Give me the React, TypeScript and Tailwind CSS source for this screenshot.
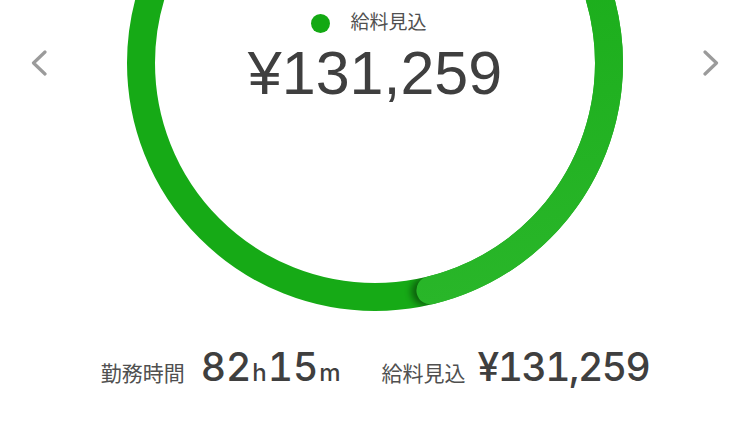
import React from "react";

const GREEN = "#16aa16";

function Chevron({ dir }: { dir: "left" | "right" }) {
  return (
    <svg width="16" height="26" viewBox="0 0 16 26" fill="none" aria-hidden="true">
      <path
        d={dir === "left" ? "M14 2 L2.5 13 L14 24" : "M2 2 L13.5 13 L2 24"}
        stroke="#9b9b9b"
        strokeWidth="3.2"
        strokeLinecap="round"
        strokeLinejoin="round"
      />
    </svg>
  );
}

// progress ring, cut off by the top of the screen
function Ring() {
  const cx = 250;
  const cy = 63;
  const r = 234;
  const end = (76.3 * Math.PI) / 180;
  const ex = cx + r * Math.cos(end);
  const ey = cy + r * Math.sin(end);
  const back = end + 0.022;
  const sx = cx + r * Math.cos(back);
  const sy = cy + r * Math.sin(back);
  return (
    <svg width="500" height="316" viewBox="0 0 500 316" className="absolute left-[125px] top-0" aria-hidden="true">
      <defs>
        <clipPath id="annulus">
          <path
            clipRule="evenodd"
            d={`M${cx - 248},${cy} a248,248 0 1,0 496,0 a248,248 0 1,0 -496,0 Z M${cx - 220},${cy} a220,220 0 1,0 440,0 a220,220 0 1,0 -440,0 Z`}
          />
        </clipPath>
        <linearGradient id="lap" gradientUnits="userSpaceOnUse" x1="250" y1="-171" x2="330" y2="300">
          <stop offset="0" stopColor="#14a914" />
          <stop offset="1" stopColor="#29b629" />
        </linearGradient>
        <filter id="soft" x="-50%" y="-50%" width="200%" height="200%">
          <feGaussianBlur stdDeviation="3.5" />
        </filter>
      </defs>
      <circle cx={cx} cy={cy} r={r} stroke={GREEN} strokeWidth="28" fill="none" />
      <g clipPath="url(#annulus)">
        <circle cx={sx} cy={sy} r="14" fill="#000" opacity="0.45" filter="url(#soft)" />
      </g>
      <path
        d={`M${cx},${cy - r} A${r},${r} 0 0 1 ${ex},${ey}`}
        stroke="url(#lap)"
        strokeWidth="28"
        strokeLinecap="round"
        fill="none"
      />
    </svg>
  );
}

export default function App() {
  return (
    <div
      className="w-[750px] h-[424px] overflow-hidden bg-white text-[#444444]"
      style={{ fontFamily: "'Liberation Sans', 'Noto Sans CJK JP', sans-serif" }}
    >
      <div className="relative h-[347px]">
        <Ring />
        <div className="relative flex items-start justify-between px-[31px]">
          <button className="mt-[50px]">
            <Chevron dir="left" />
          </button>

          <div className="flex flex-col items-center">
            <div className="mt-[13px] flex h-[20px] items-center gap-[20px] pr-[12px]">
              <span className="h-[19px] w-[19px] rounded-full bg-[#13a913]" />
              <span className="text-[19px] leading-[20px] text-[#505050]">給料見込</span>
            </div>
            <div className="mt-[10px] text-[61px] leading-none text-[#3f3f3f]">¥131,259</div>
          </div>

          <button className="mt-[50px]">
            <Chevron dir="right" />
          </button>
        </div>
      </div>

      <div className="flex items-baseline justify-center gap-[41px] leading-none text-[#3f3f3f]">
        <div className="flex items-baseline">
          <span className="text-[21px] text-[#505050]">勤務時間</span>
          <span className="ml-[16px] flex items-baseline font-medium tabular-nums font-['Inter',sans-serif]">
            <span className="text-[39px]">82</span>
            <span className="text-[24px] px-[1px]">h</span>
            <span className="text-[39px]">15</span>
            <span className="text-[24px] pl-[1px]">m</span>
          </span>
        </div>
        <div className="flex items-baseline">
          <span className="text-[21px] text-[#505050]">給料見込</span>
          <span className="ml-[12px] text-[39px] font-medium tabular-nums tracking-[-1.5px] font-['Inter',sans-serif]">
            ¥131,259
          </span>
        </div>
      </div>
    </div>
  );
}
